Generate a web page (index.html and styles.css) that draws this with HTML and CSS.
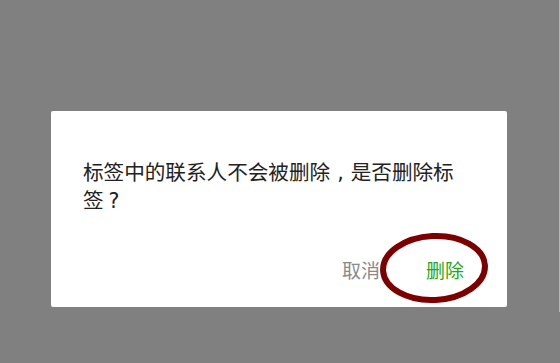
FILE: index.html
```html
<!DOCTYPE html>
<html>
<head>
<meta charset="utf-8">
<link rel="stylesheet" href="styles.css">
</head>
<body>
<div class="page">
  <div class="stage">
    <div class="dialog">
      <p class="msg">标签中的联系人不会被删除<span class="punct">,</span>是否删除标<span class="nw">签<span class="punct">?</span></span></p>
      <div class="actions">
        <span class="btn cancel">取消</span>
        <span class="btn confirm">删除</span>
      </div>
      <svg class="mark" width="120" height="80" viewBox="0 0 120 80">
        <ellipse cx="60" cy="40" rx="51" ry="32" fill="none" stroke="#7d0000" stroke-width="6" transform="rotate(-3 60 40)"/>
      </svg>
    </div>
  </div>
  <div class="edge"></div>
</div>
</body>
</html>
```

FILE: styles.css
```css
html, body {
  margin: 0;
  padding: 0;
  background: #808080;
}
.page {
  display: flex;
  width: 560px;
  height: 363px;
  overflow: hidden;
}
.stage {
  flex: 1;
  padding: 111px 0 0 51px;
}
.edge {
  width: 1px;
  height: 312px;
  background: #b8b8b8;
}
.dialog {
  position: relative;
  width: 456px;
  height: 196px;
  box-sizing: border-box;
  background: #fff;
  border-radius: 2px;
  padding: 47px 32px 0 32px;
  font-family: "Noto Sans CJK SC", sans-serif;
}
.msg {
  margin: 0;
  font-size: 20.6px;
  line-height: 26px;
  color: #222;
}
.nw {
  white-space: nowrap;
}
.punct {
  display: inline-block;
  width: 1em;
  text-align: center;
  font-family: "DejaVu Sans", sans-serif;
}
.actions {
  display: flex;
  justify-content: flex-end;
  gap: 46px;
  margin-top: 44px;
  padding-right: 11px;
}
.btn {
  font-size: 19px;
  line-height: 24px;
}
.cancel {
  color: #8a8a8a;
}
.confirm {
  color: #22a822;
}
.mark {
  position: absolute;
  left: 323px;
  top: 117px;
}
```
